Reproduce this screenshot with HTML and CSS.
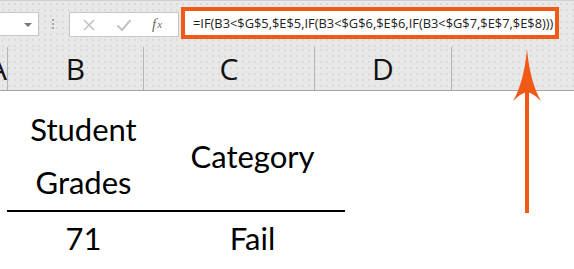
FILE: index.html
```html
<!DOCTYPE html>
<html>
<head>
<meta charset="utf-8">
<link rel="stylesheet" href="styles.css">
</head>
<body>
<div class="app">
  <div class="toolbar">
    <div class="namebox"><span class="caret"></span></div>
    <div class="grip"><i></i><i></i><i></i></div>
    <div class="fxbox">
      <span class="ico ico-x">
        <svg width="14" height="14" viewBox="0 0 14 14"><path d="M2 2 L12 12 M12 2 L2 12" stroke="#c2c2c2" stroke-width="1.6" fill="none"/></svg>
      </span>
      <span class="ico ico-ok">
        <svg width="16" height="14" viewBox="0 0 16 14"><path d="M1.5 7.5 L6 12 L14.5 2" stroke="#c2c2c2" stroke-width="2" fill="none"/></svg>
      </span>
      <span class="ico ico-fx">f<sub>x</sub></span>
    </div>
    <div class="formula">=IF(B3&lt;$G$5,$E$5,IF(B3&lt;$G$6,$E$6,IF(B3&lt;$G$7,$E$7,$E$8)))</div>
  </div>
  <div class="colheads">
    <div class="ch ch-a">A</div>
    <div class="ch ch-b">B</div>
    <div class="ch ch-c">C</div>
    <div class="ch ch-d">D</div>
    <div class="ch ch-e"></div>
  </div>
  <div class="sheet">
    <div class="tbl">
      <div class="row head">
        <div class="cell c1">Student<br>Grades</div>
        <div class="cell c2">Category</div>
      </div>
      <div class="row data">
        <div class="cell c1">71</div>
        <div class="cell c2">Fail</div>
      </div>
    </div>
  </div>
  <svg class="arrow" width="574" height="269" viewBox="0 0 574 269">
    <rect x="525" y="88" width="4" height="125" fill="#f15a16"/>
    <path d="M527 49 Q530 82 541 101 Q533 93 527 92 Q521 93 513 101 Q524 82 527 49 Z" fill="#f15a16"/>
  </svg>
</div>
</body>
</html>
```
FILE: styles.css
```css
* { box-sizing: border-box; }
html, body { margin: 0; padding: 0; }
body { width: 574px; height: 269px; overflow: hidden; background: #fff; }
.app { position: relative; width: 574px; height: 269px; }

.toolbar {
  height: 47px;
  background-color: #e8e8e8;
  background-image: radial-gradient(circle, #d9d9d9 0.7px, transparent 0.9px);
  background-size: 6px 6px;
  border-top: 1px solid #cfcfcf;
  display: flex;
  align-items: flex-start;
}
.namebox {
  margin-top: 11px;
  width: 39px;
  height: 24px;
  background: #fff;
  border: 1px solid #c6c6c6;
  border-left: none;
  position: relative;
  display: flex;
  justify-content: flex-end;
  align-items: center;
  padding-right: 6px;
}
.caret {
  width: 0; height: 0;
  border-left: 4px solid transparent;
  border-right: 4px solid transparent;
  border-top: 4px solid #777;
  margin-top: 1px;
}
.grip {
  margin-left: 13px;
  margin-top: 18px;
  width: 2px;
  display: flex;
  flex-direction: column;
  gap: 2px;
}
.grip i { display: block; width: 2px; height: 2px; background: #a8a8a8; }
.fxbox {
  margin-left: 15px;
  margin-top: 11px;
  width: 110px;
  height: 25px;
  background: #fff;
  border: 1px solid #c6c6c6;
  display: flex;
  align-items: center;
  padding-left: 12px;
}
.ico { display: flex; align-items: center; justify-content: center; }
.ico-x { width: 14px; }
.ico-ok { width: 16px; margin-left: 20px; }
.ico-fx {
  margin-left: 20px;
  font-family: "Liberation Serif", serif;
  font-style: italic;
  font-size: 15px;
  color: #6a6a6a;
  line-height: 1;
}
.ico-fx sub { font-size: 11px; vertical-align: -1px; margin-left: 1px; }
.formula {
  margin-left: 2px;
  margin-top: 6px;
  width: 378px;
  height: 32px;
  background: #fff;
  border: 4px solid #f15a16;
  font-family: "Open Sans", "Noto Sans", sans-serif;
  font-size: 12.85px;
  color: #222;
  line-height: 24px;
  padding-left: 8px;
  white-space: nowrap;
  overflow: hidden;
}

.colheads {
  height: 44px;
  background-color: #e8e8e8;
  background-image: radial-gradient(circle, #d9d9d9 0.7px, transparent 0.9px);
  background-size: 6px 6px;
  border-bottom: 1px solid #a4a4a4;
  display: flex;
}
.ch {
  border-right: 1px solid #b4b4b4;
  font-family: "Open Sans", "Noto Sans", sans-serif;
  font-size: 30px;
  line-height: 43px;
  color: #111;
  text-align: center;
  overflow: hidden;
  flex: none;
}
.ch-a { width: 8px; text-align: right; text-indent: -14px; }
.ch-b { width: 136px; }
.ch-c { width: 171px; }
.ch-d { width: 137px; }
.ch-e { flex: 1; border-right: none; }

.sheet { padding-left: 7px; }
.tbl { width: 338px; }
.row { display: flex; }
.row.head { padding-top: 12px; border-bottom: 2px solid #000; padding-bottom: 1px; }
.cell {
  font-family: "Lato", "Open Sans", sans-serif;
  font-size: 31px;
  line-height: 53px;
  color: #000;
  text-align: center;
  display: flex;
  align-items: center;
  justify-content: center;
}
.c1 { width: 153px; }
.c2 { width: 185px; }

.arrow { position: absolute; left: 0; top: 0; pointer-events: none; }
```
